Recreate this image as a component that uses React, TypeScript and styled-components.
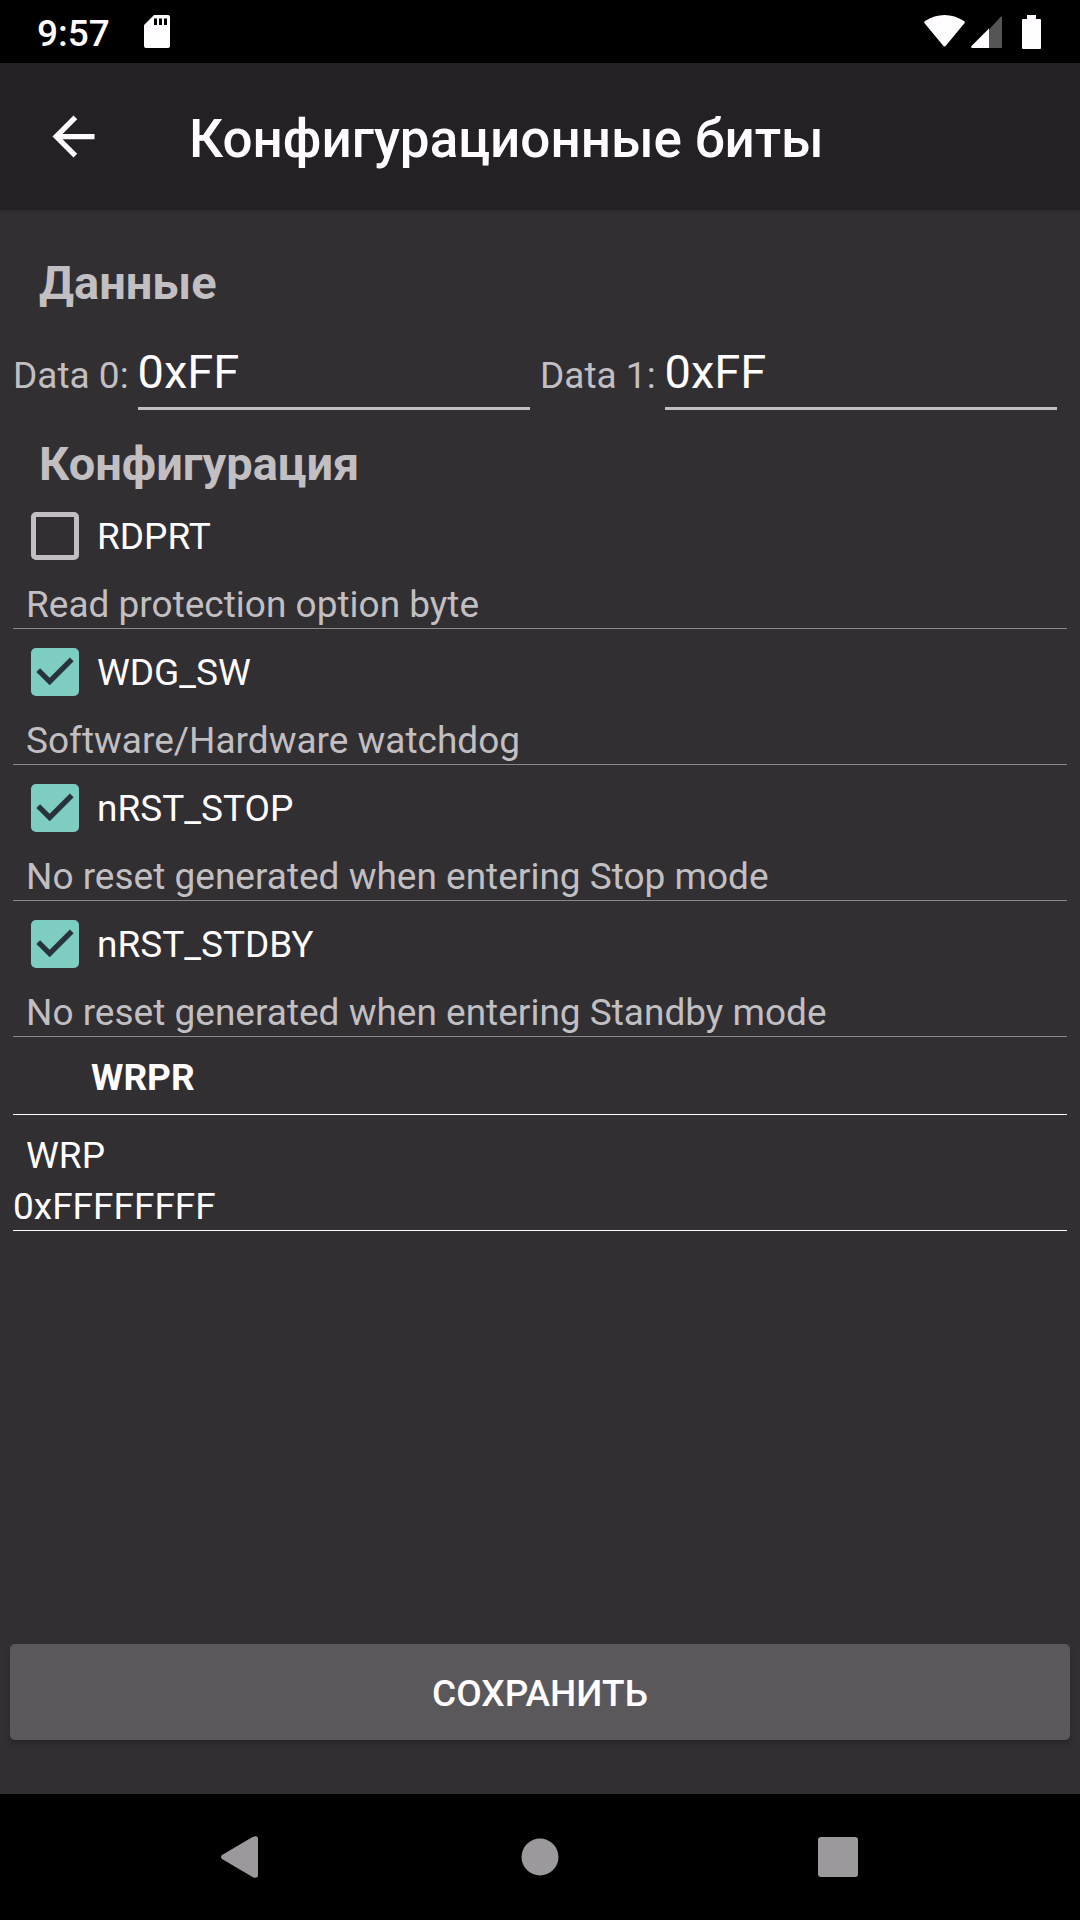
import React, { useState } from "react";
import styled, { createGlobalStyle } from "styled-components";

const colors = {
  surface: "#312f32",
  bar: "#232124",
  text: "#fffdff",
  muted: "#c1bfc2",
  faint: "#8a888b",
  accent: "#7ecdc2",
  button: "#5a585b",
  nav: "#9b999c",
};

const GlobalStyle = createGlobalStyle`
  * { box-sizing: border-box; }
  body { margin: 0; background: ${colors.surface}; }
  body, button, input {
    font-family: Roboto, "Noto Sans", sans-serif;
    font-size: 37px;
    line-height: 43px;
    color: ${colors.text};
  }
`;

const Screen = styled.div`
  display: flex;
  flex-direction: column;
  min-height: 100vh;
`;

const StatusBar = styled.div`
  display: flex;
  align-items: center;
  gap: 34px;
  height: 63px;
  padding: 0 39px 0 37px;
  background: #000;
`;

const Clock = styled.time`
  padding-top: 4px;
  font-weight: 500;
`;

const StatusIcons = styled.div`
  display: flex;
  align-items: center;
  gap: 6px;
  margin-left: auto;
`;

const BatteryIcon = styled.svg`
  margin-left: 14px;
`;

const AppBar = styled.header`
  display: flex;
  align-items: center;
  gap: 84px;
  height: 147px;
  padding: 0 42px;
  background: ${colors.bar};
  box-shadow: 0 1px 4px rgba(0, 0, 0, 0.2);
`;

const BackButton = styled.button`
  display: flex;
  padding: 0;
  border: 0;
  background: none;
  cursor: pointer;
`;

const Title = styled.h1`
  margin: 0;
  padding-top: 4px;
  font-size: 53px;
  line-height: 62px;
  font-weight: 500;
`;

const Content = styled.main`
  flex: 1;
  padding: 45px 13px 0;
`;

const SectionTitle = styled.h2`
  margin: 0;
  padding-left: 26px;
  font-size: 47px;
  line-height: 55px;
  font-weight: 700;
  color: ${colors.muted};
`;

const DataRow = styled.div`
  display: grid;
  grid-template-columns: repeat(2, minmax(0, 1fr));
  margin: 34px 0 26px;
`;

const DataField = styled.div`
  display: flex;
  align-items: baseline;
  gap: 9px;
  padding-right: 10px;
`;

const DataLabel = styled.label`
  flex: none;
  color: ${colors.muted};
`;

const DataInput = styled.input`
  flex: 1;
  min-width: 0;
  height: 66px;
  padding: 0 0 8px;
  border: 0;
  border-bottom: 3px solid ${colors.muted};
  outline: 0;
  background: none;
  font-size: 47px;
  line-height: 55px;
`;

const OptionList = styled.ul`
  margin: 2px 0 0;
  padding: 0;
  list-style: none;
`;

const Option = styled.li`
  padding-bottom: 2px;
  border-bottom: 1px solid ${colors.faint};
`;

const OptionLabel = styled.label`
  display: flex;
  align-items: center;
  gap: 18px;
  height: 86px;
  padding-left: 18px;
  cursor: pointer;
`;

const Tick = styled.span`
  display: grid;
  width: 48px;
  height: 48px;

  > * {
    grid-area: 1 / 1;
  }
`;

const TickInput = styled.input`
  appearance: none;
  width: 48px;
  height: 48px;
  margin: 0;
  border: 5px solid ${colors.muted};
  border-radius: 5px;

  &:checked {
    border-color: ${colors.accent};
    background: ${colors.accent};
  }

  &:not(:checked) + svg {
    display: none;
  }
`;

const TickMark = styled.svg`
  z-index: 1;
  pointer-events: none;
`;

const Description = styled.p`
  margin: 0;
  padding: 4px 13px 0;
  color: ${colors.muted};
`;

const GroupTitle = styled.h3`
  margin: 0;
  padding: 19px 78px 15px;
  border-bottom: 1px solid ${colors.text};
  font-size: 37px;
  font-weight: 700;
`;

const RegisterField = styled.div`
  display: flex;
  flex-direction: column;
  gap: 8px;
  padding-top: 19px;
`;

const RegisterLabel = styled.label`
  padding-left: 13px;
`;

const RegisterInput = styled.input`
  width: 100%;
  height: 46px;
  padding: 0 0 2px;
  border: 0;
  border-bottom: 1px solid ${colors.text};
  outline: 0;
  background: none;
`;

const SaveButton = styled.button`
  height: 96px;
  margin: 20px 10px 54px;
  padding: 2px 0 0;
  border: 0;
  border-radius: 5px;
  background: ${colors.button};
  box-shadow: 0 4px 5px rgba(0, 0, 0, 0.2);
  font-weight: 500;
  text-transform: uppercase;
  cursor: pointer;
`;

const NavBar = styled.nav`
  display: flex;
  justify-content: center;
  gap: 172px;
  height: 126px;
  background: #000;
`;

const NavButton = styled.button`
  display: flex;
  align-items: center;
  justify-content: center;
  width: 126px;
  padding: 0;
  border: 0;
  background: none;
  cursor: pointer;
`;

const options = [
  { name: "RDPRT", description: "Read protection option byte", on: false },
  { name: "WDG_SW", description: "Software/Hardware watchdog", on: true },
  { name: "nRST_STOP", description: "No reset generated when entering Stop mode", on: true },
  { name: "nRST_STDBY", description: "No reset generated when entering Standby mode", on: true },
];

const dataFields = ["Data 0", "Data 1"];

function OptionRow({ name, description, on }: { name: string; description: string; on: boolean }) {
  const [checked, setChecked] = useState(on);
  return (
    <Option>
      <OptionLabel>
        <Tick>
          <TickInput type="checkbox" checked={checked} onChange={(e) => setChecked(e.target.checked)} />
          <TickMark width="48" height="48" viewBox="3 3 18 18" fill="#28323a" aria-hidden="true">
            <path d="M10 17l-5-5 1.41-1.41L10 14.17l7.59-7.59L19 8z" />
          </TickMark>
        </Tick>
        {name}
      </OptionLabel>
      <Description>{description}</Description>
    </Option>
  );
}

export default function App() {
  return (
    <Screen>
      <GlobalStyle />
      <StatusBar>
        <Clock>9:57</Clock>
        <svg width="26" height="33" viewBox="0 0 26 33" aria-hidden="true">
          <path
            fill="#fffdff"
            fillRule="evenodd"
            d="M10 0H24a2 2 0 0 1 2 2V31a2 2 0 0 1-2 2H2a2 2 0 0 1-2-2V10ZM10 3.500v6.500h3V3.500Zm5 0v6.500h3V3.500Zm5 0v6.500h3V3.500Z"
          />
        </svg>
        <StatusIcons>
          <svg width="41" height="34" viewBox="0 0 41 34" aria-hidden="true">
            <path fill="#fffdff" d="M.8 8.500C-.2 7.500 0 6.800 1 6 13-2 28-2 40 6c1 .8 1.200 1.500.2 2.500L22 30.500c-1 1.300-2 1.300-3 0Z" />
          </svg>
          <svg width="31" height="32" viewBox="0 0 31 32" aria-hidden="true">
            <path fill="#565457" d="M18 13.500 29.500 1Q31 0 31 1.500V32H18Z" />
            <path fill="#fffdff" d="M18 12.500V32H1.500Q0 32 0 30.500Z" />
          </svg>
          <BatteryIcon width="19" height="34" viewBox="0 0 19 34" aria-hidden="true">
            <path fill="#fffdff" d="M5 0h9v4h4q1 0 1 1v28q0 1-1 1H1q-1 0-1-1V5q0-1 1-1h4Z" />
          </BatteryIcon>
        </StatusIcons>
      </StatusBar>
      <AppBar>
        <BackButton type="button" aria-label="Назад">
          <svg width="63" height="63" viewBox="0 0 24 24" fill="#fffdff" aria-hidden="true">
            <path d="M20 11H7.830l5.590-5.590L12 4l-8 8 8 8 1.410-1.410L7.830 13H20v-2z" />
          </svg>
        </BackButton>
        <Title>Конфигурационные биты</Title>
      </AppBar>
      <Content>
        <SectionTitle>Данные</SectionTitle>
        <DataRow>
          {dataFields.map((label, i) => (
            <DataField key={label}>
              <DataLabel htmlFor={`data-${i}`}>{label}:</DataLabel>
              <DataInput id={`data-${i}`} defaultValue="0xFF" />
            </DataField>
          ))}
        </DataRow>
        <SectionTitle>Конфигурация</SectionTitle>
        <OptionList>
          {options.map((option) => (
            <OptionRow key={option.name} {...option} />
          ))}
        </OptionList>
        <GroupTitle>WRPR</GroupTitle>
        <RegisterField>
          <RegisterLabel htmlFor="wrp">WRP</RegisterLabel>
          <RegisterInput id="wrp" defaultValue="0xFFFFFFFF" />
        </RegisterField>
      </Content>
      <SaveButton type="button">Сохранить</SaveButton>
      <NavBar>
        <NavButton type="button" aria-label="Назад">
          <svg width="42" height="42" viewBox="1 0 42 42" aria-hidden="true">
            <path fill={colors.nav} d="M2 19 33 .8Q38 -1 38 3V39Q38 43 33 41.200L2 23Q0 21 2 19Z" />
          </svg>
        </NavButton>
        <NavButton type="button" aria-label="Домой">
          <svg width="38" height="38" viewBox="0 0 38 38" aria-hidden="true">
            <circle cx="19" cy="19" r="18.500" fill={colors.nav} />
          </svg>
        </NavButton>
        <NavButton type="button" aria-label="Обзор">
          <svg width="40" height="40" viewBox="0 0 40 40" aria-hidden="true">
            <rect width="40" height="40" rx="3" fill={colors.nav} />
          </svg>
        </NavButton>
      </NavBar>
    </Screen>
  );
}
